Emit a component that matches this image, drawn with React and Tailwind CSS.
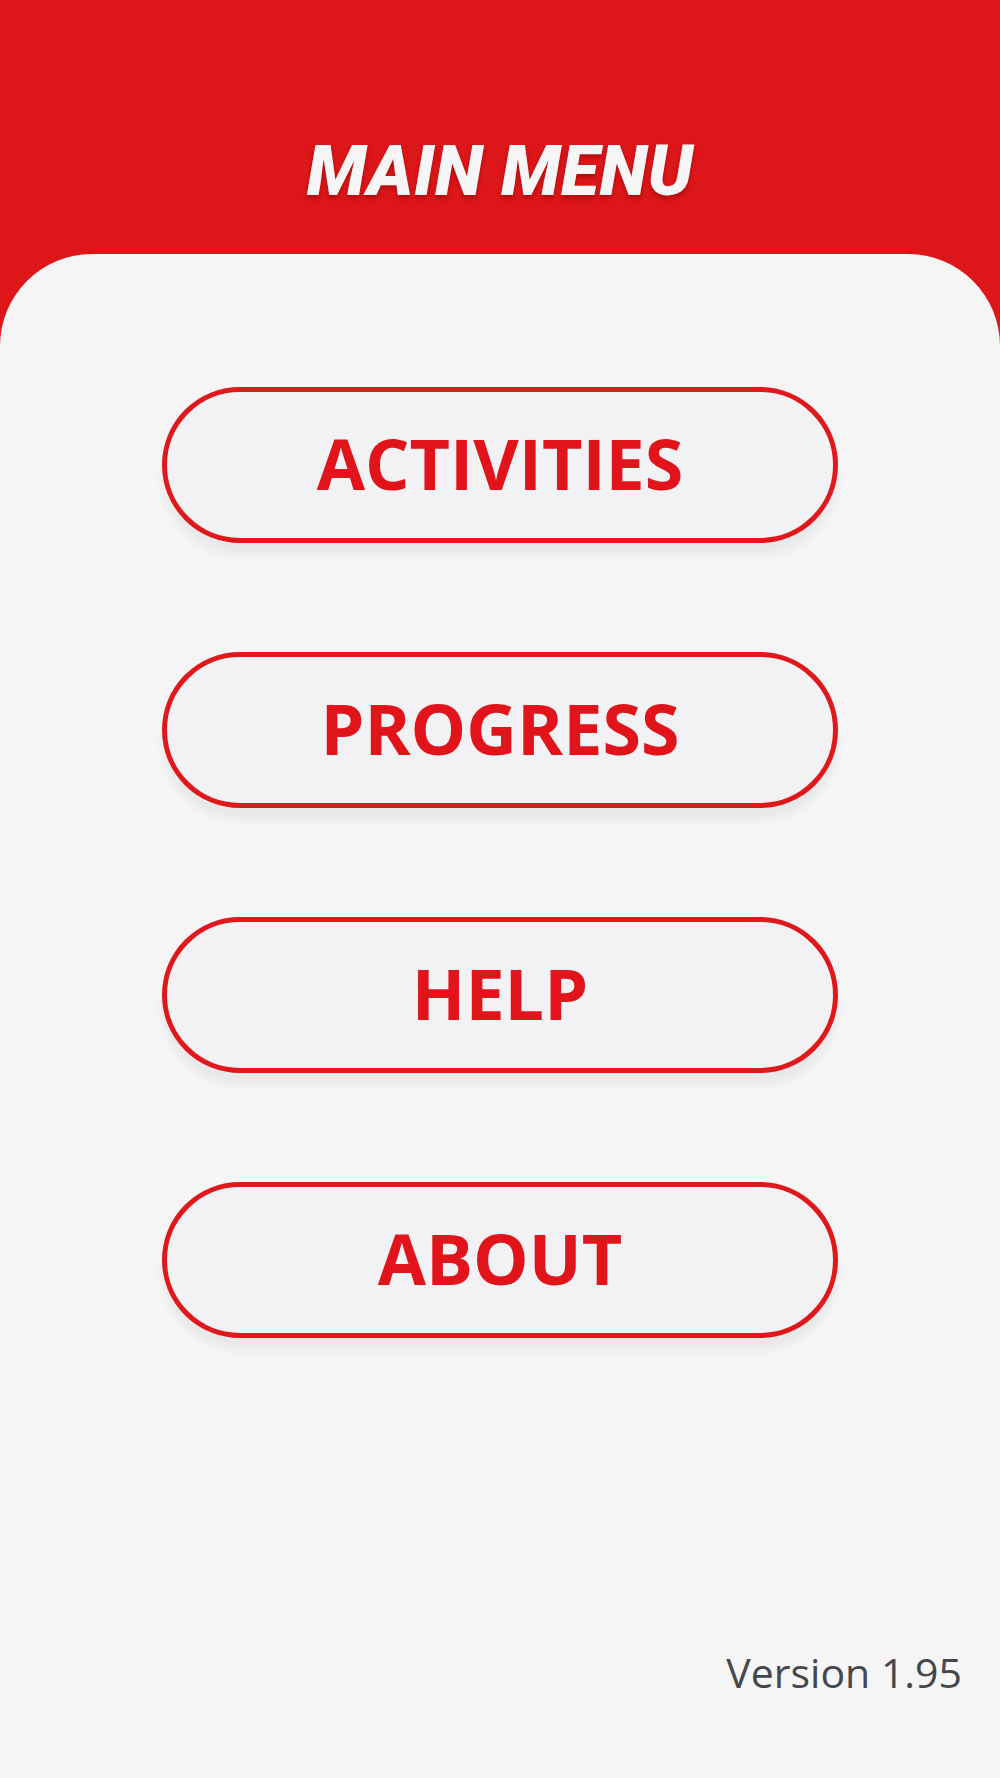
import React from 'react'

const items = ['ACTIVITIES', 'PROGRESS', 'HELP', 'ABOUT']

function MenuButton({ label }) {
  return (
    <button
      type="button"
      className="w-[676px] h-[156px] rounded-full border-[5px] border-[#e0181c] bg-[#f2f2f4] shadow-[0_12px_8px_rgba(0,0,0,0.05)] flex items-center justify-center pb-[4px]"
    >
      <span className="text-[70px] font-bold text-[#e0141a] leading-none tracking-[0px] font-['Open_Sans',sans-serif]">
        {label}
      </span>
    </button>
  )
}

export default function App() {
  return (
    <div className="min-h-[1778px] bg-[#dc1619] flex flex-col font-['Open_Sans',sans-serif]">
      <header className="h-[254px] flex items-start justify-center pt-[136px]">
        <h1 className="text-[70px] font-black italic leading-none text-[#f6f6f6] tracking-[0.5px] font-['Roboto',sans-serif] [text-shadow:0_3px_4px_rgba(120,0,0,0.45)]">
          MAIN MENU
        </h1>
      </header>

      <main className="flex-1 bg-[#f5f5f5] rounded-t-[92px] flex flex-col items-center pt-[133px]">
        <div className="flex flex-col items-center gap-[109px]">
          {items.map((label) => (
            <MenuButton key={label} label={label} />
          ))}
        </div>

        <div className="mt-auto self-end pr-[38px] pb-[84px]">
          <span className="text-[41px] text-[#45474d] leading-none">Version 1.95</span>
        </div>
      </main>
    </div>
  )
}
